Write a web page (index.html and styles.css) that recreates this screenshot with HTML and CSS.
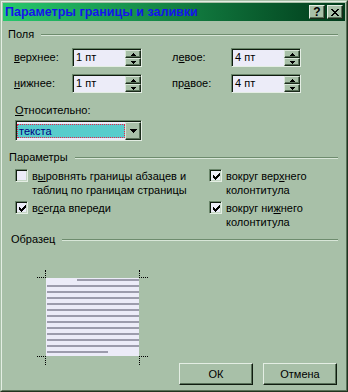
FILE: index.html
```html
<!DOCTYPE html>
<html lang="ru">
<head>
<meta charset="utf-8">
<title>Параметры границы и заливки</title>
<link rel="stylesheet" href="styles.css">
</head>
<body>
<div class="dialog">
  <div class="frame">
    <div class="titlebar">
      <span class="title">Параметры границы и заливки</span>
      <span class="tbtn help">?</span>
      <span class="tbtn close"><svg width="8" height="7" viewBox="0 0 8 7" shape-rendering="crispEdges"><path d="M0 0h2v1h-2zM6 0h2v1h-2zM1 1h2v1h-2zM5 1h2v1h-2zM2 2h4v1h-4zM3 3h2v1h-2zM2 4h4v1h-4zM1 5h2v1h-2zM5 5h2v1h-2zM0 6h2v1h-2zM6 6h2v1h-2z"/></svg></span>
    </div>
    <div class="content">
      <div class="group"><span class="glabel">Поля</span><span class="rule"></span></div>

      <div class="margins">
        <span class="mlabel"><u>в</u>ерхнее:</span>
        <div class="spin">
          <span class="spin-text">1 пт</span>
          <span class="spin-btns">
            <span class="sbtn"><svg width="5" height="3" viewBox="0 0 5 3" shape-rendering="crispEdges"><path d="M2 0h1v1h1v1h1v1H0V2h1V1h1z"/></svg></span>
            <span class="sbtn"><svg width="5" height="3" viewBox="0 0 5 3" shape-rendering="crispEdges"><path d="M0 0h5v1H4v1H3v1H2V2H1V1H0z"/></svg></span>
          </span>
        </div>
        <span class="mlabel r">л<u>е</u>вое:</span>
        <div class="spin">
          <span class="spin-text">4 пт</span>
          <span class="spin-btns">
            <span class="sbtn"><svg width="5" height="3" viewBox="0 0 5 3" shape-rendering="crispEdges"><path d="M2 0h1v1h1v1h1v1H0V2h1V1h1z"/></svg></span>
            <span class="sbtn"><svg width="5" height="3" viewBox="0 0 5 3" shape-rendering="crispEdges"><path d="M0 0h5v1H4v1H3v1H2V2H1V1H0z"/></svg></span>
          </span>
        </div>

        <span class="mlabel"><u>н</u>ижнее:</span>
        <div class="spin">
          <span class="spin-text">1 пт</span>
          <span class="spin-btns">
            <span class="sbtn"><svg width="5" height="3" viewBox="0 0 5 3" shape-rendering="crispEdges"><path d="M2 0h1v1h1v1h1v1H0V2h1V1h1z"/></svg></span>
            <span class="sbtn"><svg width="5" height="3" viewBox="0 0 5 3" shape-rendering="crispEdges"><path d="M0 0h5v1H4v1H3v1H2V2H1V1H0z"/></svg></span>
          </span>
        </div>
        <span class="mlabel r">пр<u>а</u>вое:</span>
        <div class="spin">
          <span class="spin-text">4 пт</span>
          <span class="spin-btns">
            <span class="sbtn"><svg width="5" height="3" viewBox="0 0 5 3" shape-rendering="crispEdges"><path d="M2 0h1v1h1v1h1v1H0V2h1V1h1z"/></svg></span>
            <span class="sbtn"><svg width="5" height="3" viewBox="0 0 5 3" shape-rendering="crispEdges"><path d="M0 0h5v1H4v1H3v1H2V2H1V1H0z"/></svg></span>
          </span>
        </div>
      </div>

      <div class="rel-label"><u>О</u>тносительно:</div>
      <div class="combo">
        <span class="combo-text"><span class="combo-sel">текста</span></span>
        <span class="combo-btn"><svg width="7" height="4" viewBox="0 0 7 4" shape-rendering="crispEdges"><path d="M0 0h7v1H6v1H5v1H4v1H3V3H2V2H1V1H0z"/></svg></span>
      </div>

      <div class="group g2"><span class="glabel">Параметры</span><span class="rule"></span></div>

      <div class="options">
        <div class="opt">
          <span class="cb"></span>
          <span class="otext">в<u>ы</u>ровнять границы абзацев и<br>таблиц по границам страницы</span>
        </div>
        <div class="opt">
          <span class="cb"><svg width="7" height="7" viewBox="0 0 7 7" shape-rendering="crispEdges"><path d="M6 0h1v1h-1zM5 1h2v1h-2zM0 2h1v1h-1zM4 2h3v1h-3zM0 3h2v1h-2zM3 3h3v1h-3zM0 4h5v1h-5zM1 5h3v1h-3zM2 6h1v1h-1z"/></svg></span>
          <span class="otext">вокруг вер<u>х</u>него<br>колонтитула</span>
        </div>
        <div class="opt">
          <span class="cb"><svg width="7" height="7" viewBox="0 0 7 7" shape-rendering="crispEdges"><path d="M6 0h1v1h-1zM5 1h2v1h-2zM0 2h1v1h-1zM4 2h3v1h-3zM0 3h2v1h-2zM3 3h3v1h-3zM0 4h5v1h-5zM1 5h3v1h-3zM2 6h1v1h-1z"/></svg></span>
          <span class="otext">в<u>с</u>егда впереди</span>
        </div>
        <div class="opt">
          <span class="cb"><svg width="7" height="7" viewBox="0 0 7 7" shape-rendering="crispEdges"><path d="M6 0h1v1h-1zM5 1h2v1h-2zM0 2h1v1h-1zM4 2h3v1h-3zM0 3h2v1h-2zM3 3h3v1h-3zM0 4h5v1h-5zM1 5h3v1h-3zM2 6h1v1h-1z"/></svg></span>
          <span class="otext">вокруг ни<u>ж</u>него<br>колонтитула</span>
        </div>
      </div>

      <div class="group g3"><span class="glabel">Образец</span><span class="rule"></span></div>

      <div class="bottom">
        <div class="preview">
          <span class="mark tl-h"></span><span class="mark tl-v"></span>
          <span class="mark tr-h"></span><span class="mark tr-v"></span>
          <span class="mark bl-h"></span><span class="mark bl-v"></span>
          <span class="mark br-h"></span><span class="mark br-v"></span>
          <div class="page">
            <i class="ln first"></i><i class="ln"></i><i class="ln"></i><i class="ln"></i>
            <i class="ln"></i><i class="ln"></i><i class="ln"></i><i class="ln"></i>
            <i class="ln"></i><i class="ln"></i><i class="ln"></i><i class="ln"></i>
            <i class="ln last"></i>
          </div>
        </div>
        <div class="buttons">
          <span class="btn">ОК</span>
          <span class="btn">Отмена</span>
        </div>
      </div>
    </div>
  </div>
</div>
</body>
</html>
```
FILE: styles.css
```css
* { box-sizing: border-box; }
html, body {
  margin: 0;
  padding: 0;
  background: #a8c0a8;
}
body {
  font-family: "Liberation Sans", Arial, sans-serif;
  font-size: 11px;
  color: #000;
}
u { text-decoration: underline; text-underline-offset: 1px; }

.dialog {
  width: 348px;
  height: 392px;
  border: 1px solid;
  border-color: #a8c0a8 #203420 #203420 #a8c0a8;
  background: #a8c0a8;
}
.frame {
  height: 100%;
  border: 1px solid;
  border-color: #e4eee4 #587058 #587058 #e4eee4;
  padding: 1px;
  display: flex;
  flex-direction: column;
}

/* title bar */
.titlebar {
  height: 18px;
  display: flex;
  align-items: center;
  padding: 0 2px 0 2px;
  background: linear-gradient(to right, #26c86c, #003a1a);
}
.title {
  flex: 1;
  font-weight: bold;
  font-size: 12.5px;
  color: #1414ec;
  white-space: nowrap;
}
.tbtn {
  width: 16px;
  height: 14px;
  margin-left: 2px;
  display: flex;
  align-items: center;
  justify-content: center;
  background: #a8c0a8;
  border: 1px solid;
  border-color: #e4eee4 #1a2a1a #1a2a1a #e4eee4;
  box-shadow: inset -1px -1px #587058;
  font-weight: bold;
  font-size: 12px;
  line-height: 1;
}
.tbtn svg { fill: #000; display: block; }

/* content */
.content {
  flex: 1;
  display: flex;
  flex-direction: column;
  padding: 0 7px 4px 5px;
}
.group {
  height: 13px;
  margin-top: 7px;
  display: flex;
  align-items: center;
  gap: 7px;
  line-height: 13px;
}
.group.g2 { margin-top: 10px; padding-left: 1px; }
.group.g3 { margin-top: 4px; padding-left: 3px; }
.rule {
  flex: 1;
  height: 2px;
  border-top: 1px solid #6e8c6e;
  border-bottom: 1px solid #d8e6d8;
}

.margins {
  margin-top: 7px;
  padding-left: 6px;
  display: grid;
  grid-template-columns: 58px 70px 89px 70px;
  grid-auto-rows: 19px;
  row-gap: 7px;
  align-items: center;
}
.mlabel { line-height: 13px; }
.mlabel.r { padding-left: 30px; }

.spin {
  height: 19px;
  display: flex;
  border: 1px solid;
  border-color: #6a866a #e4eee4 #e4eee4 #6a866a;
  box-shadow: inset 1px 1px #101c10;
  background: #ececf8;
  padding: 1px 0 0 1px;
}
.spin-text {
  flex: 1;
  line-height: 15px;
  padding-left: 2px;
}
.spin-btns {
  width: 16px;
  display: flex;
  flex-direction: column;
}
.sbtn {
  flex: 1;
  display: flex;
  align-items: center;
  justify-content: center;
  background: #a8c0a8;
  border: 1px solid;
  border-color: #d8e6d8 #1a2a1a #1a2a1a #d8e6d8;
  box-shadow: inset -1px -1px #587058;
}
.sbtn svg { fill: #000; display: block; }

.rel-label {
  margin-top: 11px;
  padding-left: 7px;
  line-height: 13px;
}
.combo {
  margin-top: 3px;
  margin-left: 7px;
  width: 127px;
  height: 21px;
  display: flex;
  border: 1px solid;
  border-color: #6a866a #e4eee4 #e4eee4 #6a866a;
  box-shadow: inset 1px 1px #101c10;
  background: #ececf8;
  padding: 1px 0 0 1px;
}
.combo-text {
  flex: 1;
  display: flex;
  align-items: center;
  padding: 0 0 1px 0;
}
.combo-sel {
  flex: 1;
  height: 14px;
  line-height: 12px;
  background: #58cccc;
  color: #000080;
  border: 1px dotted #e8204c;
  padding-left: 1px;
}
.combo-btn {
  width: 16px;
  display: flex;
  align-items: center;
  justify-content: center;
  background: #a8c0a8;
  border: 1px solid;
  border-color: #d8e6d8 #1a2a1a #1a2a1a #d8e6d8;
  box-shadow: inset -1px -1px #587058;
}
.combo-btn svg { fill: #000; display: block; }

.options {
  margin-top: 5px;
  padding-left: 7px;
  display: grid;
  grid-template-columns: 194px 1fr;
  row-gap: 4px;
}
.opt {
  display: flex;
  align-items: flex-start;
  gap: 4px;
  line-height: 14px;
}
.cb {
  width: 13px;
  height: 13px;
  flex: none;
  border: 1px solid;
  border-color: #6a866a #e4eee4 #e4eee4 #6a866a;
  box-shadow: inset 1px 1px #101c10, inset -1px -1px #c4d6c4;
  background: #ececf8;
  padding: 2px 0 0 2px;
}
.cb svg { display: block; fill: #000; margin: 1px 0 0 1px; }
.otext { white-space: nowrap; }

.bottom {
  flex: 1;
  display: flex;
  justify-content: space-between;
}
.preview {
  position: relative;
  margin: 32px 0 0 38px;
  width: 93px;
  height: 78px;
}
.page {
  width: 93px;
  height: 78px;
  background: #ececf8;
  padding: 1px 0 0 1px;
  display: flex;
  flex-direction: column;
  gap: 4px;
}
.ln {
  display: block;
  height: 2px;
  background: #9c9cac;
}
.ln.first { margin-left: 30px; }
.ln.last { width: 61px; }

.mark { position: absolute; border: 0 dotted #000; }
.tl-h { left: -9px; top: -1px; width: 9px; border-top-width: 1px; }
.tl-v { left: -1px; top: -8px; height: 8px; border-left-width: 1px; }
.tr-h { left: 93px; top: -1px; width: 9px; border-top-width: 1px; }
.tr-v { left: 93px; top: -8px; height: 8px; border-left-width: 1px; }
.bl-h { left: -9px; top: 78px; width: 9px; border-top-width: 1px; }
.bl-v { left: -1px; top: 78px; height: 9px; border-left-width: 1px; }
.br-h { left: 93px; top: 78px; width: 9px; border-top-width: 1px; }
.br-v { left: 93px; top: 78px; height: 9px; border-left-width: 1px; }

.buttons {
  align-self: flex-end;
  display: flex;
  gap: 10px;
  margin-right: 1px;
}
.btn {
  width: 74px;
  height: 22px;
  display: flex;
  align-items: center;
  justify-content: center;
  border: 1px solid;
  border-color: #e4eee4 #101c10 #101c10 #e4eee4;
  box-shadow: inset -1px -1px #587058;
  background: #a8c0a8;
}
```
